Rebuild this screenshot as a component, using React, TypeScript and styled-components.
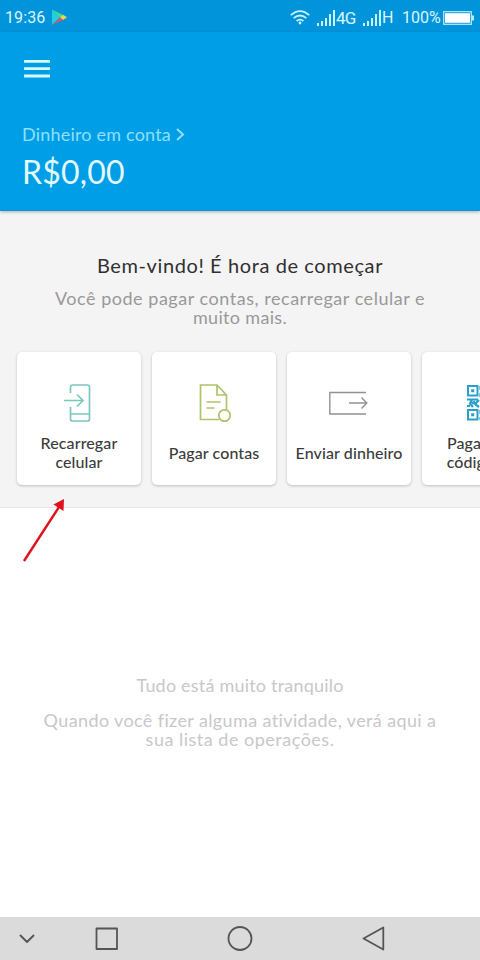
import React from "react";
import styled, { createGlobalStyle } from "styled-components";

const GlobalStyle = createGlobalStyle`
  * { box-sizing: border-box; }
  html, body { margin: 0; padding: 0; overflow: hidden; }
  body { font-family: Lato, "Open Sans", sans-serif; background: #fff; }
  svg { display: block; flex: none; }
`;

const Screen = styled.div`
  position: relative;
  width: 480px;
  height: 960px;
  display: flex;
  flex-direction: column;
  background: #fff;
  overflow: hidden;
`;

const StatusBar = styled.div`
  height: 32px;
  flex: none;
  background: #0294da;
  color: #d9f7ff;
  display: flex;
  align-items: center;
  justify-content: space-between;
  padding: 3px 5px 0;
  font: 400 16px/20px Roboto, sans-serif;
`;

const StatusGroup = styled.div`
  display: flex;
  align-items: center;
`;

const SignalSlot = styled.div<{ $gap: number }>`
  margin-left: ${(p) => p.$gap}px;
`;

const StatusText = styled.span<{ $width: number; $size?: number; $spacing?: number }>`
  width: ${(p) => p.$width}px;
  font-size: ${(p) => p.$size ?? 16}px;
  letter-spacing: ${(p) => p.$spacing ?? 0}px;
  white-space: nowrap;
`;

const Header = styled.header`
  position: relative;
  height: 179px;
  flex: none;
  background: #009ee6;
  border-bottom: 1px solid #1b8fc6;
  box-shadow: 0 1px 3px rgba(0, 60, 90, 0.35);
  padding: 28px 22px 0;
  display: flex;
  flex-direction: column;
  align-items: flex-start;
`;

const MenuButton = styled.button`
  border: 0;
  padding: 0 0 0 2px;
  background: none;
  height: 18px;
`;

const AccountLink = styled.div`
  margin-top: 44px;
  display: flex;
  align-items: center;
  gap: 5px;
`;

const Text = styled.p<{ $size: number; $line: number; $spacing?: number; $color: string; $weight?: number }>`
  margin: 0;
  font-size: ${(p) => p.$size}px;
  line-height: ${(p) => p.$line}px;
  letter-spacing: ${(p) => p.$spacing ?? 0}px;
  color: ${(p) => p.$color};
  font-weight: ${(p) => p.$weight ?? 400};
  white-space: nowrap;
`;

const Balance = styled.div`
  margin-top: 6px;
  color: #e2faff;
  font-size: 32px;
  line-height: 40px;
  letter-spacing: 0.2px;
`;

const Welcome = styled.section`
  height: 297px;
  flex: none;
  background: #f4f4f4;
  border-bottom: 1px solid #e6e6e6;
  padding-top: 42px;
  display: flex;
  flex-direction: column;
  align-items: center;
  text-align: center;
`;

const Subtitle = styled.div`
  margin-top: 12px;
`;

const Cards = styled.div`
  width: 100%;
  margin-top: 25px;
  padding-left: 17px;
  display: flex;
  gap: 11px;
`;

const Card = styled.div`
  width: 124px;
  height: 133px;
  flex: none;
  border-radius: 5px;
  background: #fff;
  box-shadow: 0 1px 3px rgba(0, 0, 0, 0.22);
  display: flex;
  flex-direction: column;
  align-items: center;
  padding-top: 30px;
`;

const CardLabel = styled.div`
  height: 40px;
  margin-top: 8px;
  display: flex;
  flex-direction: column;
  justify-content: center;
`;

const Empty = styled.section`
  flex: 1;
  padding-top: 167px;
  display: flex;
  flex-direction: column;
  align-items: center;
  text-align: center;
`;

const EmptyDetail = styled.div`
  margin-top: 16px;
`;

const NavBar = styled.nav`
  height: 43px;
  flex: none;
  background: #dbdbdb;
`;

const Pointer = styled.svg`
  position: absolute;
  left: 16px;
  top: 492px;
`;

const PlayLogo = () => (
  <svg width="17" height="17" viewBox="0 0 17 17">
    <path d="M1 0.5 9 8.5 1 16z" fill="#20cfe0" />
    <path d="M1 0.5 12 6 9 8.5z" fill="#42dc91" />
    <path d="M12 5.8 16 8.3 12 11 9 8.5z" fill="#f6d44a" />
    <path d="M1 16 9 8.5 12 11z" fill="#cf5869" />
  </svg>
);

const Wifi = () => (
  <svg width="20" height="15" viewBox="0 0 20 15" fill="none" stroke="#c9f4ff" strokeWidth="1.8">
    <path d="M.8 5.2Q10-3 19.2 5.2M3.7 8.1q6.3-5.3 12.6 0M6.6 11q3.4-2.6 6.8 0" />
    <circle cx="10" cy="13" r="1.4" fill="#c9f4ff" stroke="none" />
  </svg>
);

const Signal = () => (
  <svg width="19" height="16" viewBox="0 0 19 16" fill="#c9f4ff">
    <path d="M0 13h2v3H0zM4 11h2v5H4zM8 8h2v8H8zM12 4h2v12h-2zM16 0h2v16h-2z" />
  </svg>
);

const Battery = () => (
  <svg width="32" height="14" viewBox="0 0 32 14">
    <rect x="0.7" y="0.7" width="27.6" height="12.6" fill="none" stroke="#b9edfa" strokeWidth="1.2" />
    <rect x="2" y="2.200" width="25" height="9.600" fill="#fff" />
    <path d="M29 4.5h2v5h-2z" fill="#b9edfa" />
  </svg>
);

const PhoneIcon = () => (
  <svg width="40" height="42" viewBox="0 0 40 42" fill="none" stroke="#79c8bd" strokeWidth="1.7">
    <path d="M11.500 11V5q0-2 2-2h15q2 0 2 2v32q0 2-2 2h-15q-2 0-2-2V25M11.500 32h19M5 18.500h19M18 12.500l6 6-6 6" />
  </svg>
);

const BillIcon = () => (
  <svg width="40" height="42" viewBox="0 0 40 42" fill="none" stroke="#adc46a" strokeWidth="1.700">
    <path d="M25 37.500H6.500V3H23l9.500 10v15M23 3v10h9.500M12.500 20h14M12.500 26h8" />
    <circle cx="30.500" cy="33.500" r="5.700" />
  </svg>
);

const SendIcon = () => (
  <svg width="40" height="42" viewBox="0 0 40 42" fill="none" stroke="#929292" strokeWidth="1.400">
    <path d="M37 10.500H.8v21.500H37M20 21h17.500M32.500 15.500l5.300 5.500-5.300 5.500" />
  </svg>
);

const QrIcon = () => (
  <svg width="40" height="42" viewBox="0 0 40 42" fill="none" stroke="#2a9fcb" strokeWidth="2">
    <path d="M4 4h9.500v9.500H4zM4 28h9.500v9.500H4zM27 4h9.500v9.500H27z" />
    <path d="M7.200 7.200h3v3h-3zM7.200 31.200h3v3h-3z" fill="#2a9fcb" stroke="none" />
    <path d="M3 17.500h5l-2 4 3 3.500M9 17.500h5M8 21.500l3-2M15 18l-4 4 4 3M3 24h3M16.500 4v4M16.500 11v4M16.500 28v4M16.500 35v3M18 21h4M20 4v8h4M20 28h5v6M27 18h9M27 24h4v4h5M30 33h6" strokeWidth="2.200" />
  </svg>
);

const cards = [
  { icon: <PhoneIcon />, lines: ["Recarregar", "celular"] },
  { icon: <BillIcon />, lines: ["Pagar contas"] },
  { icon: <SendIcon />, lines: ["Enviar dinheiro"] },
  { icon: <QrIcon />, lines: ["Pagar com", "código QR"] },
];

export default function App() {
  return (
    <>
      <GlobalStyle />
      <Screen>
        <StatusBar>
          <StatusGroup>
            <StatusText $width={46} $spacing={0.1}>19:36</StatusText>
            <PlayLogo />
          </StatusGroup>
          <StatusGroup>
            <Wifi />
            <SignalSlot $gap={7}><Signal /></SignalSlot>
            <StatusText $width={27} $size={17} $spacing={-0.8}>4G</StatusText>
            <Signal />
            <StatusText $width={20}>H</StatusText>
            <StatusText $width={41}>100%</StatusText>
            <Battery />
          </StatusGroup>
        </StatusBar>
        <Header>
          <MenuButton aria-label="Menu">
            <svg width="26" height="18" viewBox="0 0 26 18" fill="#d8faff">
              <path d="M0 0h26v2.800H0zM0 7.300h26v2.800H0zM0 14.600h26v2.800H0z" />
            </svg>
          </MenuButton>
          <AccountLink>
            <Text $size={18} $line={24} $spacing={0.2} $color="#8fe0fb">Dinheiro em conta</Text>
            <svg width="9" height="13" viewBox="0 0 9 13" fill="none" stroke="#8fe0fb" strokeWidth="2">
              <path d="M1 1l6 5.500L1 12" />
            </svg>
          </AccountLink>
          <Balance>R$0,00</Balance>
        </Header>
        <Welcome>
          <Text $size={20} $line={24} $spacing={0.6} $color="#303030">Bem-vindo! É hora de começar</Text>
          <Subtitle>
            <Text $size={18} $line={19} $spacing={0.53} $color="#999">Você pode pagar contas, recarregar celular e</Text>
            <Text $size={18} $line={19} $spacing={0.33} $color="#999">muito mais.</Text>
          </Subtitle>
          <Cards>
            {cards.map((card) => (
              <Card key={card.lines[0]}>
                {card.icon}
                <CardLabel>
                  {card.lines.map((line) => (
                    <Text key={line} $size={16} $line={19} $spacing={0.1} $color="#3c3c3c" $weight={500}>{line}</Text>
                  ))}
                </CardLabel>
              </Card>
            ))}
          </Cards>
        </Welcome>
        <Empty>
          <Text $size={18} $line={20} $spacing={0.2} $color="#c8c8c8">Tudo está muito tranquilo</Text>
          <EmptyDetail>
            <Text $size={18} $line={19} $spacing={0.38} $color="#c8c8c8">Quando você fizer alguma atividade, verá aqui a</Text>
            <Text $size={18} $line={19} $spacing={0.5} $color="#c8c8c8">sua lista de operações.</Text>
          </EmptyDetail>
        </Empty>
        <NavBar>
          <svg width="480" height="43" viewBox="0 0 480 43" fill="none" stroke="#555" strokeWidth="1.800">
            <path d="M20 18l7 7 7-7M96.500 11.500h20.500v20.500H96.500zM383.300 10.500v22L363.500 21.500z" strokeLinejoin="round" />
            <circle cx="240" cy="21.500" r="11.500" />
          </svg>
        </NavBar>
        <Pointer width="54" height="76" viewBox="0 0 54 76">
          <path d="M8 69 43 15" stroke="#e0101b" strokeWidth="2.400" />
          <path d="M48 7 47.500 19 37.500 12.500z" fill="#e0101b" />
        </Pointer>
      </Screen>
    </>
  );
}
